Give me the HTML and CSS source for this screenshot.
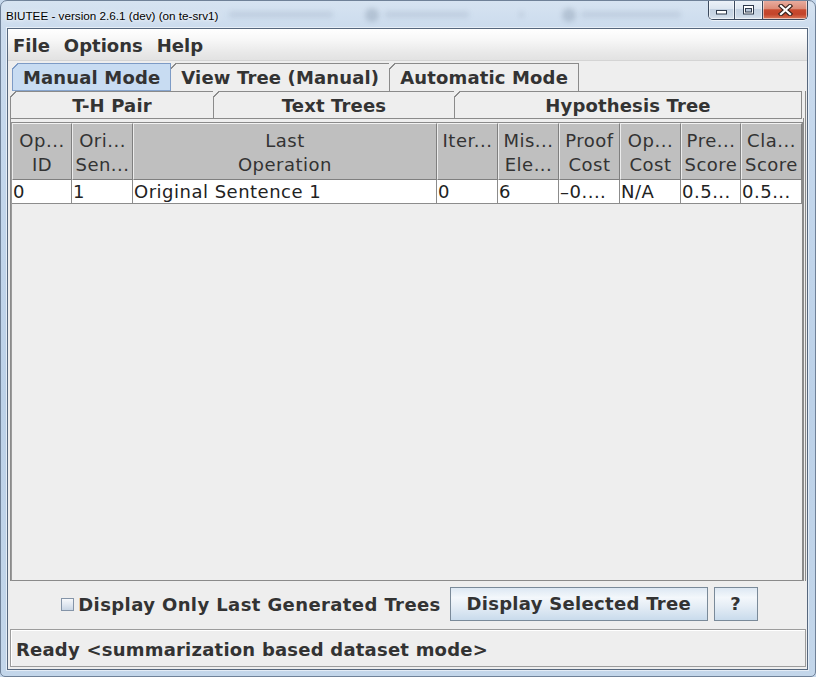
FILE: index.html
```html
<!DOCTYPE html>
<html>
<head>
<meta charset="utf-8">
<title>BIUTEE</title>
<link rel="stylesheet" href="styles.css">
</head>
<body>
<div class="window">
  <div class="titlebar">
    <div class="title">BIUTEE - version 2.6.1 (dev) (on te-srv1)</div>
    <div class="ghosts" aria-hidden="true">
      <span class="ghost gt1"></span><span class="ghost gi gi1"></span><span class="ghost gt2"></span><span class="ghost ga"></span><span class="ghost gi gi2"></span><span class="ghost gt3"></span>
    </div>
    <div class="caption">
      <div class="cbtn cmin"><svg width="12" height="5" viewBox="0 0 12 5"><rect x="0.5" y="0.5" width="10" height="3.5" fill="#fff" stroke="#2e3a4b"/></svg></div>
      <div class="cbtn cmax"><svg width="12" height="10" viewBox="0 0 12 10"><rect x="0.5" y="0.5" width="10" height="8.5" fill="#fff" stroke="#2e3a4b"/><rect x="2.5" y="3.5" width="6" height="3.5" fill="#b9c7d8" stroke="#2e3a4b"/></svg></div>
      <div class="cbtn cclose"><svg width="15" height="12" viewBox="0 0 15 12"><path d="M3 2 L12 10 M12 2 L3 10" stroke="#3a2520" stroke-width="4.4" stroke-linecap="square" fill="none"/><path d="M3 2 L12 10 M12 2 L3 10" stroke="#fff" stroke-width="2.2" stroke-linecap="square" fill="none"/></svg></div>
    </div>
  </div>

  <div class="client">
    <div class="menubar">
      <span class="menu">File</span>
      <span class="menu">Options</span>
      <span class="menu">Help</span>
    </div>

    <div class="main">
      <div class="tabrow row1">
        <div class="tab sel">Manual Mode</div>
        <div class="tab">View Tree (Manual)</div>
        <div class="tab">Automatic Mode</div>
      </div>
      <div class="outer-content">
        <div class="tabrow row2">
          <div class="tab t-pair">T-H Pair</div>
          <div class="tab t-text">Text Trees</div>
          <div class="tab t-hyp">Hypothesis Tree</div>
        </div>
        <div class="inner-content">
          <div class="scrollpane">
            <div class="grid">
              <div class="th">Op...<br>ID</div>
              <div class="th">Ori...<br>Sen...</div>
              <div class="th">Last<br>Operation</div>
              <div class="th">Iter...</div>
              <div class="th">Mis...<br>Ele...</div>
              <div class="th">Proof<br>Cost</div>
              <div class="th">Op...<br>Cost</div>
              <div class="th">Pre...<br>Score</div>
              <div class="th">Cla...<br>Score</div>

              <div class="td">0</div>
              <div class="td">1</div>
              <div class="td">Original Sentence 1</div>
              <div class="td">0</div>
              <div class="td">6</div>
              <div class="td">–0....</div>
              <div class="td">N/A</div>
              <div class="td">0.5...</div>
              <div class="td">0.5...</div>
            </div>
          </div>
        </div>
      </div>
    </div>

    <div class="bottom">
      <label class="check"><span class="box"></span><span class="check-label">Display Only Last Generated Trees</span></label>
      <button class="btn btn-display">Display Selected Tree</button>
      <button class="btn btn-help">?</button>
    </div>

    <div class="status">Ready &lt;summarization based dataset mode&gt;</div>
  </div>
</div>
</body>
</html>
```

FILE: styles.css
```css
* { box-sizing: border-box; }

html, body {
  margin: 0;
  padding: 0;
}

body {
  width: 816px;
  height: 677px;
  overflow: hidden;
  background: #c6d8ec;
  font-family: "DejaVu Sans", "Noto Sans", sans-serif;
  color: #333333;
}

.window {
  width: 816px;
  height: 677px;
  display: flex;
  flex-direction: column;
  background: linear-gradient(180deg, #d6e3f1 0px, #cbdbed 28px, #c4d7ec 140px, #bcd1e8 400px, #c3d6ea 100%);
  border: 1px solid #6f8198;
  border-radius: 7px 7px 5px 5px;
  overflow: hidden;
}

/* ---------- title bar ---------- */
.titlebar {
  height: 27px;
  display: flex;
  align-items: flex-start;
  padding: 0 7px 0 5px;
}

.title {
  margin-top: 8px;
  font-family: "Liberation Sans", Arial, sans-serif;
  font-size: 11.7px;
  line-height: 13px;
  color: #000;
  white-space: nowrap;
  text-shadow: 0 0 7px rgba(255,255,255,0.95), 0 0 3px rgba(255,255,255,0.9);
}

.ghosts {
  flex: 1;
  display: flex;
  align-items: center;
  height: 27px;
}

.ghost {
  display: block;
  height: 7px;
  background: rgba(70, 92, 122, 0.11);
  filter: blur(2.5px);
  border-radius: 3px;
}
.gt1 { margin-left: 11px; width: 104px; }
.gi { height: 14px; width: 14px; border-radius: 50%; background: rgba(60, 80, 105, 0.2); }
.gi1 { margin-left: 32px; }
.gt2 { margin-left: 6px; width: 84px; }
.ga { margin-left: 50px; width: 5px; }
.gi2 { margin-left: 38px; }
.gt3 { margin-left: 5px; width: 100px; }

.caption {
  display: flex;
  height: 20px;
  margin-top: -1px;
  border: 1px solid #3c4a5e;
  border-top: none;
  border-radius: 0 0 5px 5px;
  overflow: hidden;
  box-shadow: 0 1px 0 rgba(255,255,255,0.6);
}

.cbtn {
  display: flex;
  align-items: center;
  justify-content: center;
  box-shadow: inset 0 0 0 1px rgba(255,255,255,0.55);
}

.cmin, .cmax {
  background: linear-gradient(180deg, #eef3f9 0%, #dde6f0 45%, #c4d2e2 50%, #cad7e5 80%, #d9e3ee 100%);
  border-right: 1px solid #3c4a5e;
}
.cmin { width: 26px; }
.cmin svg { margin-top: 6px; }
.cmax { width: 28px; }
.cclose {
  width: 44px;
  background: linear-gradient(180deg, #eab0a3 0%, #dc8c78 45%, #c84a2f 52%, #c3442a 75%, #dc7a5c 100%);
}

/* ---------- client ---------- */
.client {
  flex: 0 0 642px;
  height: 642px;
  margin: 0 7px 0 6px;
  display: flex;
  flex-direction: column;
  background: #eeeeee;
  border: 1px solid #56677d;
  box-shadow: 0 0 0 1px rgba(255,255,255,0.55);
}

.menubar {
  flex: 0 0 32px;
  display: flex;
  gap: 14px;
  padding: 6px 0 0 5px;
  background: linear-gradient(180deg, #ffffff 0%, #f7f7f7 35%, #e9e9e9 75%, #e2e2e2 100%);
  border-bottom: 1px solid #d4d4d4;
}

.menu {
  font-weight: bold;
  font-size: 18px;
  line-height: 21px;
  color: #333;
}

.main {
  flex: 1;
  display: flex;
  flex-direction: column;
  padding: 2px 1px 0 2px;
  min-height: 0;
}

.tabrow {
  display: flex;
  flex: 0 0 auto;
}

.row1 {
  padding-left: 2px;
}

.tab {
  position: relative;
  font-weight: bold;
  font-size: 18px;
  line-height: 21px;
  letter-spacing: 0.15px;
  color: #333;
  white-space: nowrap;
  text-align: center;
  background: #eeeeee;
  border: 1px solid #8a8a8a;
  --corner: #8a8a8a;
}

.tab + .tab { margin-left: -1px; }

.tab::before {
  content: "";
  position: absolute;
  top: -1px;
  left: -1px;
  width: 7px;
  height: 7px;
  background: linear-gradient(to bottom right, #eeeeee 0, #eeeeee calc(50% - 0.8px), var(--corner) calc(50% - 0.8px), var(--corner) calc(50% + 0.6px), transparent calc(50% + 0.6px));
}

.row1 .tab {
  height: 28px;
  padding: 3px 10px 0 10px;
  border-bottom: none;
}

.row1 .tab.sel {
  z-index: 1;
  background: #c8dcf2;
  border-color: #7d9bc6;
  --corner: #7d9bc6;
  box-shadow: inset 0 -1px 0 #86a4cd;
}

.outer-content {
  flex: 1;
  display: flex;
  flex-direction: column;
  border-right: 1px solid #8a8a8a;
  min-height: 0;
}

.row2 .tab {
  height: 28px;
  padding-top: 3px;
}
.t-pair { width: 204px; }
.t-text { width: 242px; }
.t-hyp { width: 348px; }

.inner-content {
  flex: 1;
  display: flex;
  flex-direction: column;
  margin-top: -1px;
  width: 794px;
  padding-top: 4px;
  border-left: 1px solid #8a8a8a;
  border-right: 1px solid #8a8a8a;
  min-height: 0;
}

.scrollpane {
  flex: 1;
  width: 792px;
  background: #eeeeee;
  border: 1px solid #8a8a8a;
  border-left-color: #9a9a9a;
}

.grid {
  display: grid;
  grid-template-columns: 60px 61px 304px 61px 61px 61px 61px 60px 61px;
}

.th {
  height: 57px;
  padding-top: 5px;
  font-size: 18px;
  line-height: 23.5px;
  letter-spacing: 0.5px;
  text-align: center;
  color: #333;
  background: #bfbfbf;
  border-top: 1px solid #f2f2f2;
  border-left: 1px solid #ececec;
  border-right: 1px solid #7f7f7f;
  border-bottom: 1px solid #7f7f7f;
  white-space: nowrap;
  overflow: hidden;
}

.td {
  height: 24px;
  padding: 1px 0 0 1px;
  font-size: 18px;
  line-height: 21px;
  letter-spacing: 0.5px;
  color: #222;
  background: #ffffff;
  border-right: 1px solid #8c8c8c;
  border-bottom: 1px solid #8c8c8c;
  white-space: nowrap;
  overflow: hidden;
}

/* ---------- bottom panel ---------- */
.bottom {
  flex: 0 0 48px;
  display: flex;
  align-items: flex-start;
  justify-content: center;
  padding: 6px 0 0 4px;
}

.check {
  height: 34px;
  display: flex;
  align-items: center;
  margin-right: 9px;
}

.box {
  width: 13px;
  height: 13px;
  margin-right: 4px;
  margin-top: 1px;
  border: 1px solid #8494a8;
  background: linear-gradient(180deg, #f6f8fb 0%, #e1e8f1 50%, #c9d6e5 100%);
}

.check-label {
  font-weight: bold;
  font-size: 18px;
  line-height: 21px;
  letter-spacing: 0.4px;
  color: #333;
  white-space: nowrap;
}

.btn {
  height: 34px;
  margin: 0;
  padding: 5px 0 6px 0;
  font-family: "DejaVu Sans", sans-serif;
  font-weight: bold;
  font-size: 18px;
  line-height: 21px;
  letter-spacing: 0.3px;
  color: #333;
  text-align: center;
  border: 1px solid #7a8a99;
  border-radius: 0;
  background: linear-gradient(180deg, #dde8f3 0%, #f3f7fb 30%, #e6eef6 55%, #c9dbec 100%);
  white-space: nowrap;
}

.btn-display { width: 258px; margin-right: 6px; }
.btn-help { width: 44px; }

/* ---------- status bar ---------- */
.status {
  flex: 0 0 38px;
  margin: 0 1px 2px 2px;
  padding: 9px 0 0 5px;
  border: 1px solid #9c9c9c;
  box-shadow: inset 1px 1px 0 #ffffff;
  font-weight: bold;
  font-size: 18px;
  line-height: 21px;
  letter-spacing: 0.22px;
  color: #333;
  white-space: nowrap;
}
```
